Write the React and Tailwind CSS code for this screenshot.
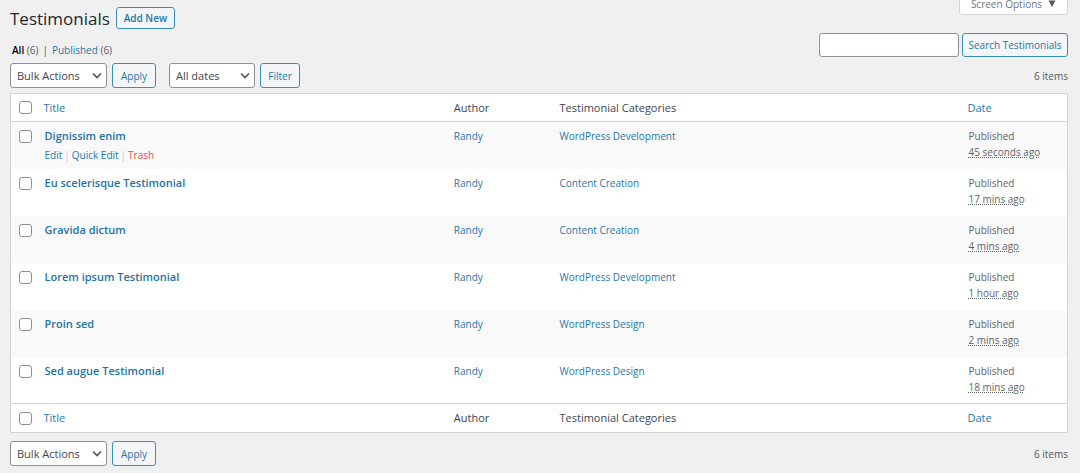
import React from 'react';
import clsx from 'clsx';

const testimonials = [
  { id: 1, title: 'Dignissim enim', category: 'WordPress Development', date: '45 seconds ago', active: true },
  { id: 2, title: 'Eu scelerisque Testimonial', category: 'Content Creation', date: '17 mins ago' },
  { id: 3, title: 'Gravida dictum', category: 'Content Creation', date: '4 mins ago' },
  { id: 4, title: 'Lorem ipsum Testimonial', category: 'WordPress Development', date: '1 hour ago' },
  { id: 5, title: 'Proin sed', category: 'WordPress Design', date: '2 mins ago' },
  { id: 6, title: 'Sed augue Testimonial', category: 'WordPress Design', date: '18 mins ago' },
];

const Button = ({ className, children }) => (
  <button
    type="button"
    className={clsx(
      'flex items-center justify-center whitespace-nowrap rounded-[3px] border border-[#3a8fb7] bg-[#f3f5f6] text-[10px] text-[#1f78a6]',
      className
    )}
  >
    {children}
  </button>
);

const Select = ({ label, options, className }) => (
  <div className={clsx('relative h-[25px]', className)}>
    <select
      aria-label={label}
      className="h-full w-full appearance-none rounded-[3px] border border-[#8c9198] bg-white pl-[6px] text-[11px] text-[#40464d]"
    >
      {options.map((option) => (
        <option key={option}>{option}</option>
      ))}
    </select>
    <svg
      className="pointer-events-none absolute top-2 right-[5px] h-[10px] w-[10px]"
      viewBox="0 0 10 10"
      fill="none"
      stroke="#50565c"
      strokeWidth="1.7"
    >
      <path d="M1 2.5 5 6.5 9 2.5" />
    </svg>
  </div>
);

const Checkbox = ({ label }) => (
  <input
    type="checkbox"
    aria-label={label}
    className="block h-[13px] w-[13px] appearance-none rounded-[3px] border border-[#8c9198] bg-white"
  />
);

const BulkActions = ({ label }) => (
  <div className="flex gap-[5px]">
    <Select label={label} options={['Bulk Actions', 'Edit', 'Move to Trash']} className="w-[97px]" />
    <Button className="h-[25px] w-11">Apply</Button>
  </div>
);

// Shared by the top and the bottom of the table
const HeadingRow = ({ label, className }) => (
  <tr className={clsx('text-left text-[11px] text-[#40464d]', className)}>
    <th className="pl-2">
      <Checkbox label={label} />
    </th>
    <th className="font-normal">
      <a href="#title" className="text-[#1f78a6]">Title</a>
    </th>
    <th className="font-normal">Author</th>
    <th className="font-normal">Testimonial Categories</th>
    <th className="font-normal">
      <a href="#date" className="text-[#1f78a6]">Date</a>
    </th>
  </tr>
);

const TestimonialRow = ({ item }) => (
  <tr className="h-[47px] align-top text-[10px] leading-4 text-[#1f78a6] odd:bg-[#f9f9f9]">
    <td className="pt-2 pl-2">
      <Checkbox label={`Select ${item.title}`} />
    </td>
    <td className="pt-[6px] pl-px">
      <a href="#edit" className="block text-[11px] font-semibold text-[#1f73a3]">{item.title}</a>
      {item.active && (
        <div className="flex gap-[2px] pt-[3px] text-[#c8c8c8]">
          <a href="#edit" className="text-[#1f78a6]">Edit</a>|
          <a href="#quick-edit" className="text-[#1f78a6]">Quick Edit</a>|
          <a href="#trash" className="text-[#e14d4d]">Trash</a>
        </div>
      )}
    </td>
    <td className="pt-[6px]">
      <a href="#author">Randy</a>
    </td>
    <td className="pt-[6px]">
      <a href="#category">{item.category}</a>
    </td>
    <td className="pt-[6px] pl-px text-[#5f6468]">
      Published
      <br />
      <abbr className="underline decoration-dotted">{item.date}</abbr>
    </td>
  </tr>
);

const App = () => {
  return (
    <div className="min-h-screen overflow-hidden bg-[#f0f0f0] pr-3 pl-[10px] font-['Open_Sans','Noto_Sans',sans-serif] text-[10px] leading-4 text-[#555a5f]">
      <header className="flex h-[33px] items-start justify-between">
        <div className="flex gap-[6px] pt-[7px]">
          <h1 className="text-[17px] leading-6 text-[#23282d]">Testimonials</h1>
          <Button className="h-[22px] w-[59px] font-semibold">Add New</Button>
        </div>
        <button
          type="button"
          className="-mt-3 flex h-[27px] w-[109px] items-center justify-center gap-[6px] rounded-b-[3px] border border-[#d2d4d7] bg-white pt-1 text-[#72777c]"
        >
          Screen Options
          <svg className="h-2 w-2" viewBox="0 0 8 8" fill="#555a5f">
            <path d="M0.5 0.5H7.5L4 7Z" />
          </svg>
        </button>
      </header>

      <div className="flex h-[30px] items-start justify-between">
        <nav className="flex gap-1 pt-[9px] pl-[2px]">
          <a href="#all"><b className="font-semibold text-black">All</b> (6)</a>
          <span>|</span>
          <a href="#published"><span className="text-[#1f78a6]">Published</span> (6)</a>
        </nav>
        <form className="flex gap-[3px]">
          <input
            type="search"
            aria-label="Search Testimonials"
            className="h-6 w-[140px] rounded-[3px] border border-[#8c9198] bg-white px-2"
          />
          <Button className="h-6 w-[106px]">Search Testimonials</Button>
        </form>
      </div>

      <div className="flex items-center justify-between pb-[5px]">
        <div className="flex gap-[13px]">
          <BulkActions label="Select bulk action" />
          <div className="flex gap-[5px]">
            <Select label="Filter by date" options={['All dates']} className="w-[86px]" />
            <Button className="h-[25px] w-10">Filter</Button>
          </div>
        </div>
        <span>6 items</span>
      </div>

      <table className="w-full table-fixed border border-[#d2d4d7] bg-white">
        <colgroup>
          <col className="w-[33px]" />
          <col />
          <col className="w-[10%]" />
          <col className="w-[408px] xl:w-[38%]" />
          <col className="w-[100px]" />
        </colgroup>
        <thead className="border-b border-[#d2d4d7]">
          <HeadingRow label="Select all" className="h-7" />
        </thead>
        <tbody>
          {testimonials.map((item) => (
            <TestimonialRow key={item.id} item={item} />
          ))}
        </tbody>
        <tfoot className="border-t border-[#d2d4d7]">
          <HeadingRow label="Select all from the bottom" className="h-[29px]" />
        </tfoot>
      </table>

      <div className="flex items-center justify-between pt-2">
        <BulkActions label="Select bottom bulk action" />
        <span>6 items</span>
      </div>
    </div>
  );
};

export default App;
